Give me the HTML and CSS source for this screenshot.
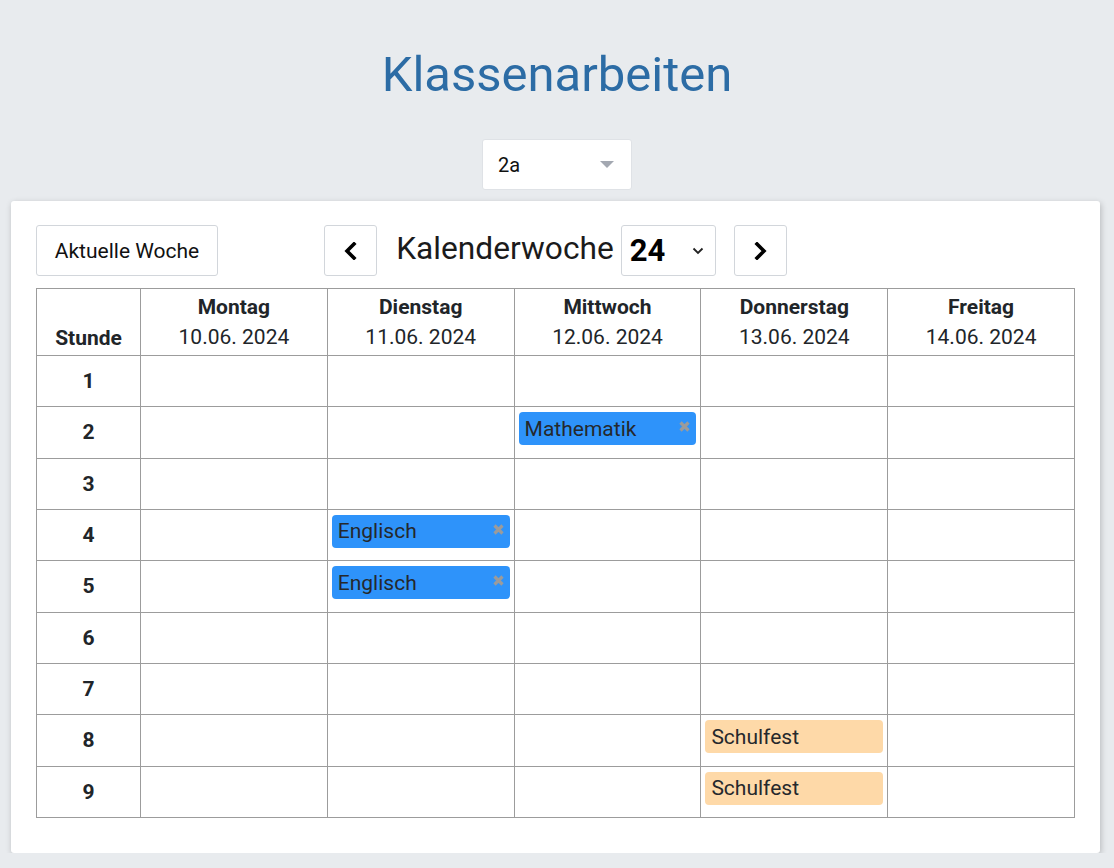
FILE: index.html
```html
<!DOCTYPE html>
<html lang="de">
<head>
<meta charset="utf-8">
<title>Klassenarbeiten</title>
<link rel="stylesheet" href="styles.css">
</head>
<body>
<h1 class="title">Klassenarbeiten</h1>
<div class="class-select-wrap">
  <div class="class-select">
    <span>2a</span>
    <span class="tri"></span>
  </div>
</div>
<main class="card">
  <div class="toolbar">
    <div class="left"><button class="btn">Aktuelle Woche</button></div>
    <div class="nav">
      <button class="btn icon-btn" aria-label="zurück">
        <svg width="14" height="18" viewBox="0 0 14 18"><path d="M10 2 L3 9 L10 16" fill="none" stroke="#000" stroke-width="3.6" stroke-linecap="square"/></svg>
      </button>
      <span class="kw-label">Kalenderwoche</span>
      <div class="kw-select">
        <span>24</span>
        <svg width="12" height="8" viewBox="0 0 12 8"><path d="M1.5 1.5 L6 6 L10.5 1.5" fill="none" stroke="#222" stroke-width="1.8"/></svg>
      </div>
      <button class="btn icon-btn" aria-label="weiter">
        <svg width="14" height="18" viewBox="0 0 14 18"><path d="M4 2 L11 9 L4 16" fill="none" stroke="#000" stroke-width="3.6" stroke-linecap="square"/></svg>
      </button>
    </div>
    <div class="right"></div>
  </div>
  <table class="plan">
    <colgroup>
      <col class="c-h"><col><col><col><col><col>
    </colgroup>
    <thead>
      <tr>
        <th class="stunde">Stunde</th>
        <th><div class="day">Montag</div><div class="date">10.06. 2024</div></th>
        <th><div class="day">Dienstag</div><div class="date">11.06. 2024</div></th>
        <th><div class="day">Mittwoch</div><div class="date">12.06. 2024</div></th>
        <th><div class="day">Donnerstag</div><div class="date">13.06. 2024</div></th>
        <th><div class="day">Freitag</div><div class="date">14.06. 2024</div></th>
      </tr>
    </thead>
    <tbody>
      <tr><th>1</th><td></td><td></td><td></td><td></td><td></td></tr>
      <tr><th>2</th><td></td><td></td><td><div class="chip blue">Mathematik<span class="x"><svg width="13" height="13" viewBox="0 0 13 13"><path d="M2.5 2.5 L10.5 10.5 M10.5 2.5 L2.5 10.5" stroke="#9b9b9b" stroke-width="3.2"/></svg></span></div></td><td></td><td></td></tr>
      <tr><th>3</th><td></td><td></td><td></td><td></td><td></td></tr>
      <tr><th>4</th><td></td><td><div class="chip blue">Englisch<span class="x"><svg width="13" height="13" viewBox="0 0 13 13"><path d="M2.5 2.5 L10.5 10.5 M10.5 2.5 L2.5 10.5" stroke="#9b9b9b" stroke-width="3.2"/></svg></span></div></td><td></td><td></td><td></td></tr>
      <tr><th>5</th><td></td><td><div class="chip blue">Englisch<span class="x"><svg width="13" height="13" viewBox="0 0 13 13"><path d="M2.5 2.5 L10.5 10.5 M10.5 2.5 L2.5 10.5" stroke="#9b9b9b" stroke-width="3.2"/></svg></span></div></td><td></td><td></td><td></td></tr>
      <tr><th>6</th><td></td><td></td><td></td><td></td><td></td></tr>
      <tr><th>7</th><td></td><td></td><td></td><td></td><td></td></tr>
      <tr><th>8</th><td></td><td></td><td></td><td><div class="chip orange">Schulfest</div></td><td></td></tr>
      <tr><th>9</th><td></td><td></td><td></td><td><div class="chip orange">Schulfest</div></td><td></td></tr>
    </tbody>
  </table>
</main>
</body>
</html>
```
FILE: styles.css
```css
* { box-sizing: border-box; }
html, body { margin: 0; padding: 0; }
body {
  background: #e8ebee;
  font-family: Roboto, "Liberation Sans", sans-serif;
  color: #212529;
}
.title {
  margin: 47px 0 0;
  font-size: 49px;
  line-height: 56px;
  font-weight: 400;
  color: #2c6ca5;
  text-align: center;
}
.class-select-wrap {
  display: flex;
  justify-content: center;
  margin-top: 36px;
}
.class-select {
  width: 150px;
  height: 51px;
  background: #fff;
  border: 1px solid #dfe2e6;
  border-radius: 3px;
  display: flex;
  align-items: center;
  justify-content: space-between;
  padding: 0 17px 0 15px;
  font-size: 20px;
  color: #111;
}
.tri {
  width: 0; height: 0;
  border-left: 7px solid transparent;
  border-right: 7px solid transparent;
  border-top: 7px solid #a3a8b1;
}
.card {
  margin: 11px 14px 0 11px;
  background: #fff;
  border-radius: 3px;
  box-shadow: 1px 2px 6px rgba(0,0,0,0.22);
  padding: 24px 25px 35px 25px;
}
.toolbar {
  display: grid;
  grid-template-columns: 1fr auto 1fr;
  align-items: center;
  height: 51px;
  margin-bottom: 12px;
}
.btn {
  font-family: inherit;
  background: #fff;
  border: 1px solid #d2d6db;
  border-radius: 3px;
  height: 51px;
  color: #111;
  cursor: pointer;
}
.left .btn {
  width: 182px;
  font-size: 21px;
  padding: 0;
}
.nav {
  display: flex;
  align-items: center;
}
.icon-btn {
  width: 53px;
  display: flex;
  align-items: center;
  justify-content: center;
  padding: 0;
}
.kw-label {
  font-size: 31.7px;
  color: #1b1b1b;
  margin: 0 7px 0 19px;
  line-height: 36px;
  position: relative;
  top: -2px;
}
.kw-select {
  width: 95px;
  height: 51px;
  border: 1px solid #d2d6db;
  border-radius: 3px;
  display: flex;
  align-items: center;
  justify-content: space-between;
  padding: 0 11px 0 8px;
  font-size: 31px;
  font-weight: 700;
  color: #000;
  margin-right: 18px;
}
.plan {
  width: 100%;
  border-collapse: collapse;
  table-layout: fixed;
  font-size: 21px;
  color: #212529;
}
.c-h { width: 104px; }
.plan th, .plan td {
  border: 1px solid #9c9c9c;
  padding: 0;
}
.plan thead th {
  font-weight: 400;
  text-align: center;
  padding: 3px 0 2px;
  vertical-align: bottom;
}
.plan thead th.stunde { font-weight: 700; line-height: 30px; }
.day { font-weight: 700; line-height: 30px; }
.date { line-height: 31px; }
.plan tbody tr { height: 51.33px; }
.plan tbody th {
  font-weight: 700;
  text-align: center;
  vertical-align: middle;
}
.plan tbody td {
  vertical-align: top;
  padding: 5px 4px 0 4px;
}
.chip {
  height: 33px;
  border-radius: 4px;
  padding: 0 6px;
  display: flex;
  align-items: center;
  justify-content: space-between;
  font-size: 21px;
  color: #25282c;
}
.chip.blue { background: #2e93fa; }
.chip.orange { background: #fed9a8; }
.x {
  display: flex;
  align-self: flex-start;
  margin-top: 8px;
  margin-right: -1px;
}
```
